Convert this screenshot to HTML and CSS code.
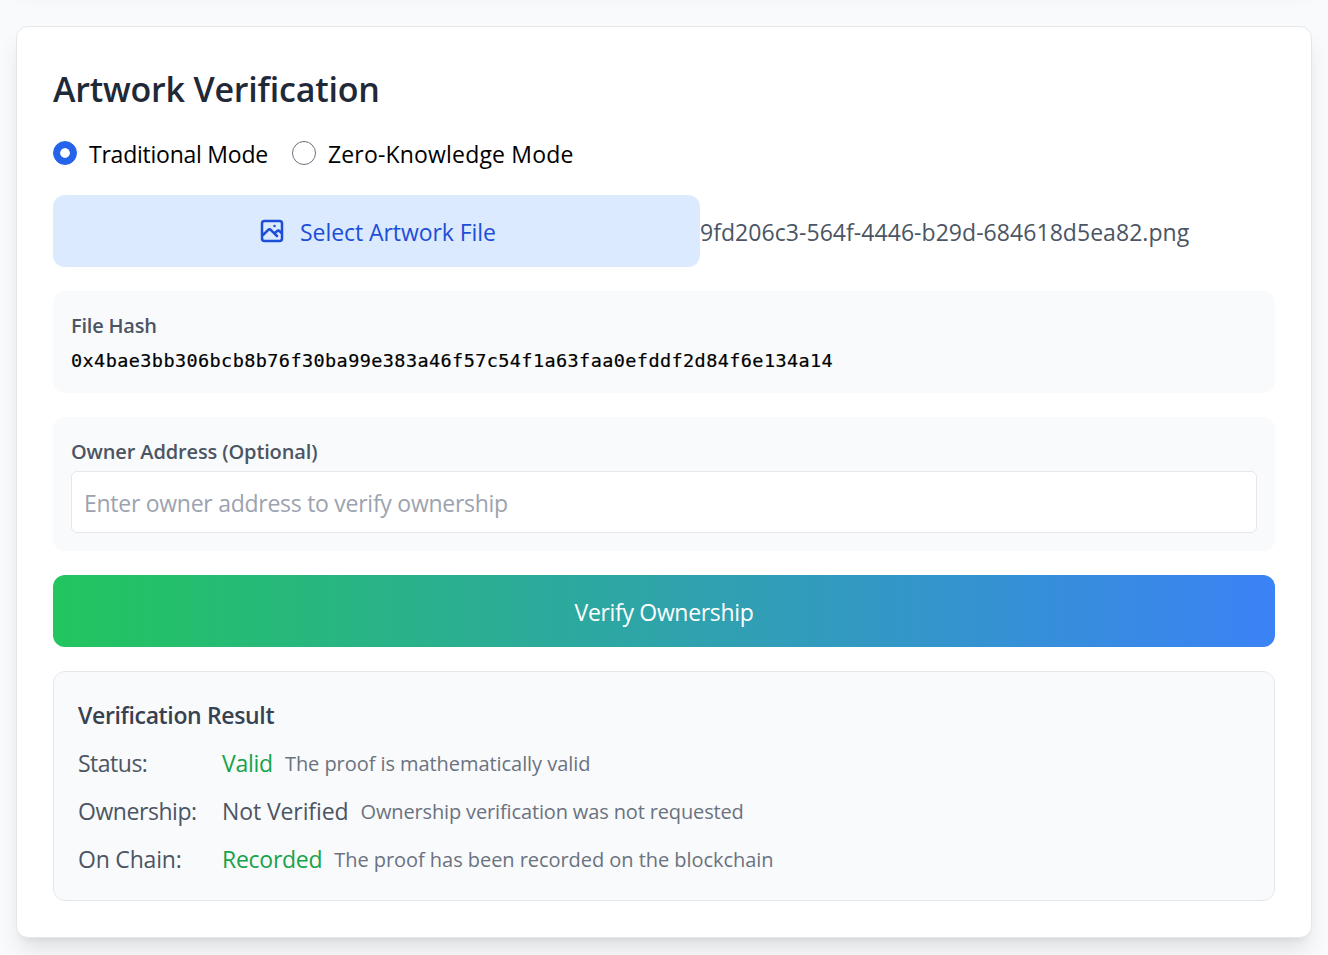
FILE: index.html
```html
<!DOCTYPE html>
<html lang="en">
<head>
<meta charset="utf-8">
<title>Artwork Verification</title>
<link rel="stylesheet" href="styles.css">
</head>
<body>
<main class="page">
  <div class="card card-previous"></div>
  <section class="card">
    <h2 class="title">Artwork Verification</h2>
    <div class="modes">
      <label class="mode"><input class="radio" type="radio" name="mode" checked><span class="text mode-a">Traditional Mode</span></label>
      <label class="mode"><input class="radio" type="radio" name="mode"><span class="text mode-b">Zero-Knowledge Mode</span></label>
    </div>
    <div class="file-row">
      <button class="select-file">
        <svg class="icon" viewBox="0 0 24 24" fill="none" stroke="currentColor" stroke-width="2" stroke-linecap="round" stroke-linejoin="round"><path d="M4 16l4.586-4.586a2 2 0 012.828 0L16 16m-2-2l1.586-1.586a2 2 0 012.828 0L20 14m-6-6h.01M6 20h12a2 2 0 002-2V6a2 2 0 00-2-2H6a2 2 0 00-2 2v12a2 2 0 002 2z"/></svg>
        <span class="text select-label">Select Artwork File</span>
      </button>
      <span class="text file-name">9fd206c3-564f-4446-b29d-684618d5ea82.png</span>
    </div>
    <div class="panel">
      <div><span class="small label hash-label">File Hash</span></div>
      <div class="hash">0x4bae3bb306bcb8b76f30ba99e383a46f57c54f1a63faa0efddf2d84f6e134a14</div>
    </div>
    <div class="panel">
      <label class="small label owner-label" for="owner">Owner Address (Optional)</label>
      <input class="owner" id="owner" type="text" placeholder="Enter owner address to verify ownership">
    </div>
    <button class="verify"><span class="text verify-label">Verify Ownership</span></button>
    <div class="result">
      <h3 class="text result-title">Verification Result</h3>
      <div class="row"><span class="text key k1">Status:</span><span class="text good v1">Valid</span><span class="small note n1">The proof is mathematically valid</span></div>
      <div class="row"><span class="text key k2">Ownership:</span><span class="text v2">Not Verified</span><span class="small note n2">Ownership verification was not requested</span></div>
      <div class="row"><span class="text key k3">On Chain:</span><span class="text good v3">Recorded</span><span class="small note n3">The proof has been recorded on the blockchain</span></div>
    </div>
  </section>
</main>
</body>
</html>
```
FILE: styles.css
```css
* { box-sizing: border-box; }
body {
  margin: 0;
  height: 955px;
  overflow: hidden;
  background: #f9fafb;
  font-family: "Open Sans", "Noto Sans", sans-serif;
  font-size: 23px;
  color: #000;
}
.page {
  display: flex;
  flex-direction: column;
  gap: 48px;
  height: 955px;
  overflow: hidden;
  padding: 0 16px;
}
.card {
  display: flex;
  flex-direction: column;
  gap: 24px;
  flex: none;
  padding: 36px;
  background: #fff;
  border: 1px solid #e5e7eb;
  border-radius: 12px;
  box-shadow: 0 15px 22.5px -4.5px rgba(0,0,0,.1), 0 6px 9px -6px rgba(0,0,0,.1);
}
.card-previous { height: 200px; margin-top: -222px; }
.text { display: block; line-height: 34px; padding-top: 2px; white-space: nowrap; }
.small { display: block; font-size: 20px; line-height: 27px; padding-top: 3px; white-space: nowrap; }
.title {
  margin: 0;
  padding-top: 4px;
  font-size: 34px;
  line-height: 44px;
  font-weight: 580;
  letter-spacing: -.2px;
  color: #1f2937;
}
.modes { display: flex; gap: 24px; }
.mode { display: flex; align-items: center; gap: 12px; }
.mode-a { letter-spacing: -.24px; }
.mode-b { letter-spacing: .18px; }
.radio {
  appearance: none;
  width: 24px;
  height: 24px;
  margin: 0;
  border: 1px solid #6b7280;
  border-radius: 50%;
  background: #fff;
}
.radio:checked {
  border-color: #2563eb;
  background: radial-gradient(circle, #fff 4.4px, #2563eb 5.2px);
}
.file-row { display: flex; align-items: center; }
.select-file {
  display: flex;
  align-items: center;
  justify-content: center;
  gap: 13px;
  width: 647px;
  height: 72px;
  padding: 0;
  border: 0;
  border-radius: 12px;
  background: #dbeafe;
  color: #1d4ed8;
  font: inherit;
}
.select-label { letter-spacing: -.06px; }
.icon { width: 30px; height: 30px; }
.file-name { color: #4b5563; letter-spacing: .05px; }
.panel {
  display: flex;
  flex-direction: column;
  gap: 6px;
  padding: 18px;
  border-radius: 12px;
  background: #f9fafb;
}
.label { font-weight: 580; color: #4b5563; }
.hash-label { letter-spacing: -.2px; }
.owner-label { letter-spacing: -.13px; }
.hash {
  font-family: "DejaVu Sans Mono", monospace;
  font-size: 18.5px;
  line-height: 28px;
  padding-top: 2px;
  letter-spacing: .41px;
  -webkit-text-stroke: .2px #000;
  white-space: nowrap;
}
.owner {
  height: 62px;
  padding: 1px 12px 0;
  border: 1px solid #e5e7eb;
  border-radius: 6px;
  background: #fff;
  font: inherit;
  letter-spacing: -.27px;
}
.owner::placeholder { color: #9ca3af; }
.verify {
  height: 72px;
  padding: 0;
  border: 0;
  border-radius: 12px;
  background: linear-gradient(to right, #22c55e, #3b82f6);
  color: #fff;
  font: inherit;
}
.verify-label { letter-spacing: -.33px; }
.result {
  display: flex;
  flex-direction: column;
  gap: 12px;
  padding: 24px;
  border: 1px solid #e5e7eb;
  border-radius: 12px;
  background: #f9fafb;
  color: #4b5563;
}
.result-title { margin: 0; font-size: inherit; font-weight: 580; letter-spacing: -.35px; color: #374151; }
.row { display: flex; align-items: center; }
.key { width: 144px; }
.good { color: #16a34a; }
.note { margin-left: 12px; color: #6b7280; }
.k1 { letter-spacing: -.5px; }
.k2 { letter-spacing: -.45px; }
.k3 { letter-spacing: -.2px; }
.v1 { letter-spacing: -.25px; }
.v2 { letter-spacing: -.1px; }
.v3 { letter-spacing: -.27px; }
.n1 { letter-spacing: -.06px; }
.n2 { letter-spacing: -.14px; }
.n3 { letter-spacing: -.05px; }
```
